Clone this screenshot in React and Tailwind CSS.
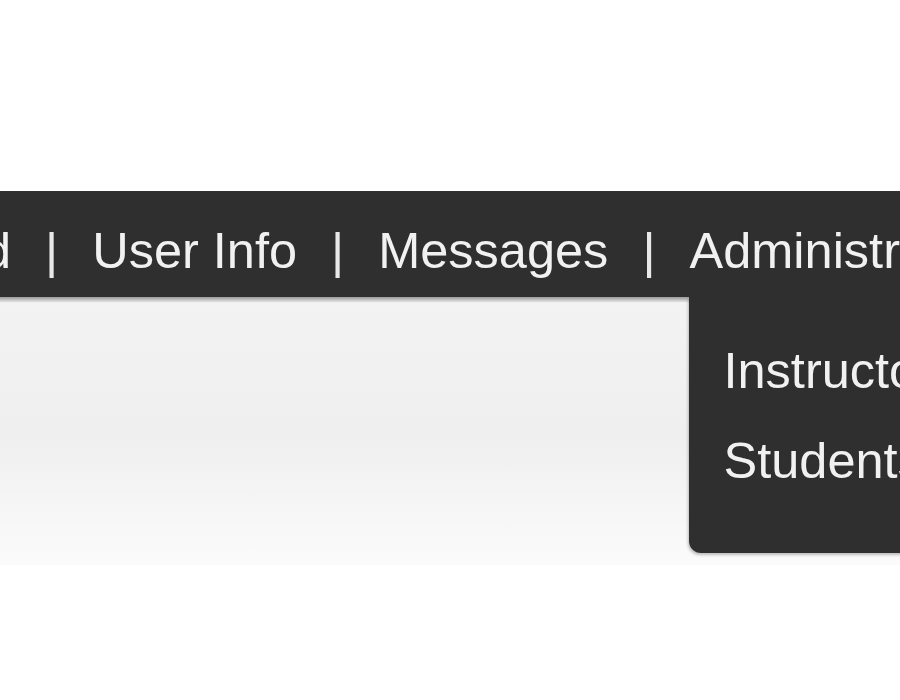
const navItems = ['Dashboard', 'User Info', 'Messages', 'Administration'];
const adminItems = ['Instructors', 'Students'];

const App = () => {
  return (
    <div
      className="min-h-[700px] w-[900px] overflow-hidden bg-white pt-[191px]"
      style={{ fontFamily: '"Liberation Sans", Arial, sans-serif' }}
    >
      {/* Top nav */}
      <nav className="relative z-10 flex h-[106px] items-stretch bg-[#2f2f2f] text-[50.5px] leading-none text-[#f1f1f1] -ml-[236px] w-[1400px]">
        {navItems.map((label, i) => (
          <div key={label} className="flex items-stretch">
            {i > 0 && (
              <span className="flex items-start px-[34px] pt-[35px] text-[#e8e8e8]">|</span>
            )}
            <div className="relative flex items-start pt-[35px] whitespace-nowrap">
              {label}
              {label === 'Administration' && (
                <div className="absolute left-[-1px] top-full w-[400px] rounded-bl-[12px] bg-[#2f2f2f] pt-[29px] pb-[47px] pl-[35px] shadow-[-1px_2px_3px_rgba(0,0,0,0.25)]">
                  {adminItems.map((item) => (
                    <div key={item} className="leading-[90px] whitespace-nowrap">
                      {item}
                    </div>
                  ))}
                </div>
              )}
            </div>
          </div>
        ))}
      </nav>

      {/* Bar edge */}
      <div className="h-[6px] bg-gradient-to-b from-[#9a9a9a] via-[#c4c4c4] to-[#f6f6f6]" />

      {/* Content panel */}
      <div className="h-[262px] bg-gradient-to-b from-[#f3f3f3] via-[#efefef] to-[#fbfbfb]" />
    </div>
  );
};

export default App;
